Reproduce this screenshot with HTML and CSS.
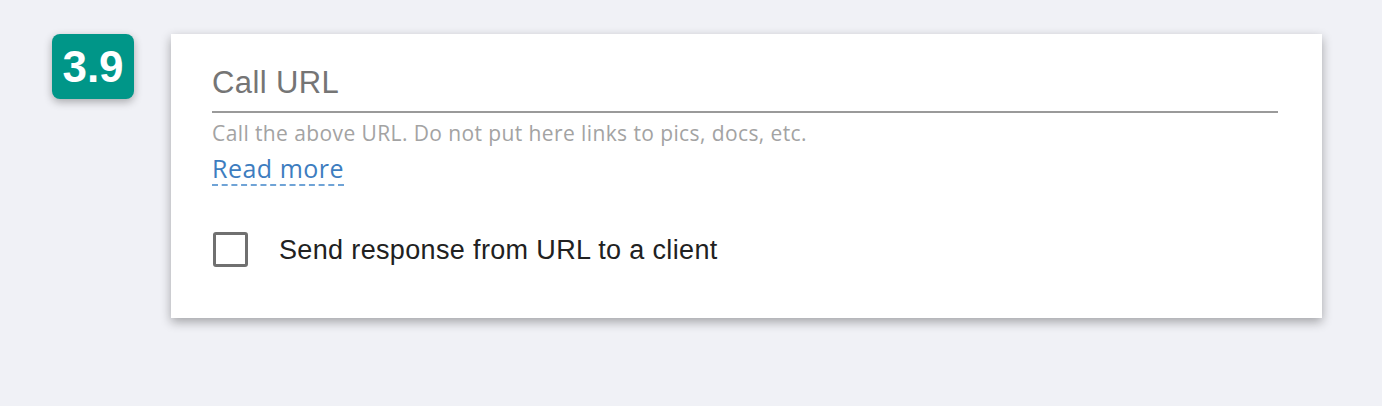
FILE: index.html
```html
<!DOCTYPE html>
<html lang="en">
<head>
    <meta charset="UTF-8">
    <title>Call URL</title>
    <link rel="stylesheet" href="styles.css">
</head>
<body>
    <div class="page">
        <!-- Step badge -->
        <div class="step-badge">3.9</div>

        <!-- Settings card -->
        <div class="card">
            <div class="field">
                <div class="field-input">Call URL</div>
                <p class="field-hint">Call the above URL. Do not put here links to pics, docs, etc.</p>
                <a href="#" class="read-more">Read more</a>
            </div>

            <label class="check-row">
                <span class="check-box"></span>
                <span class="check-label">Send response from URL to a client</span>
            </label>
        </div>
    </div>
</body>
</html>
```

FILE: styles.css
```css
body {
    margin: 0;
    padding: 0;
    background-color: #f0f1f6;
    font-family: 'Liberation Sans', Arial, sans-serif;
    color: #212121;
}

.page {
    display: flex;
    align-items: flex-start;
    padding: 34px 60px 60px 52px;
    gap: 37px;
}

.step-badge {
    width: 82px;
    height: 65px;
    flex-shrink: 0;
    background-color: #009688;
    color: white;
    border-radius: 8px;
    box-shadow: 0 3px 8px rgba(0, 0, 0, 0.3);
    display: flex;
    align-items: center;
    justify-content: center;
    font-size: 44px;
    font-weight: bold;
    line-height: 1;
}

.card {
    flex: 1;
    background: white;
    padding: 31px 44px 51px 41px;
    box-shadow: 0 4px 10px rgba(0, 0, 0, 0.32);
}

.field {
    display: flex;
    flex-direction: column;
    align-items: flex-start;
}

.field-input {
    align-self: stretch;
    font-size: 31px;
    letter-spacing: 0.4px;
    color: #757575;
    line-height: 36px;
    padding-bottom: 10px;
    border-bottom: 2px solid #9a9a9a;
}

.field-hint {
    font-family: 'Open Sans', sans-serif;
    font-size: 21px;
    letter-spacing: 0.4px;
    color: #a3a3a3;
    margin: 7px 0 0;
    line-height: 26px;
}

.read-more {
    font-family: 'Open Sans', sans-serif;
    font-size: 25px;
    letter-spacing: 0.5px;
    line-height: 30px;
    color: #3d7dbf;
    text-decoration: none;
    padding-bottom: 1px;
    border-bottom: 2px dashed #6fa3d6;
    margin-top: 7px;
}

.check-row {
    display: flex;
    align-items: center;
    gap: 31px;
    margin-top: 46px;
    padding-left: 1px;
}

.check-box {
    width: 29px;
    height: 29px;
    border: 3px solid #707070;
    border-radius: 3px;
}

.check-label {
    font-size: 27px;
    letter-spacing: 0.35px;
    line-height: 32px;
}
```
